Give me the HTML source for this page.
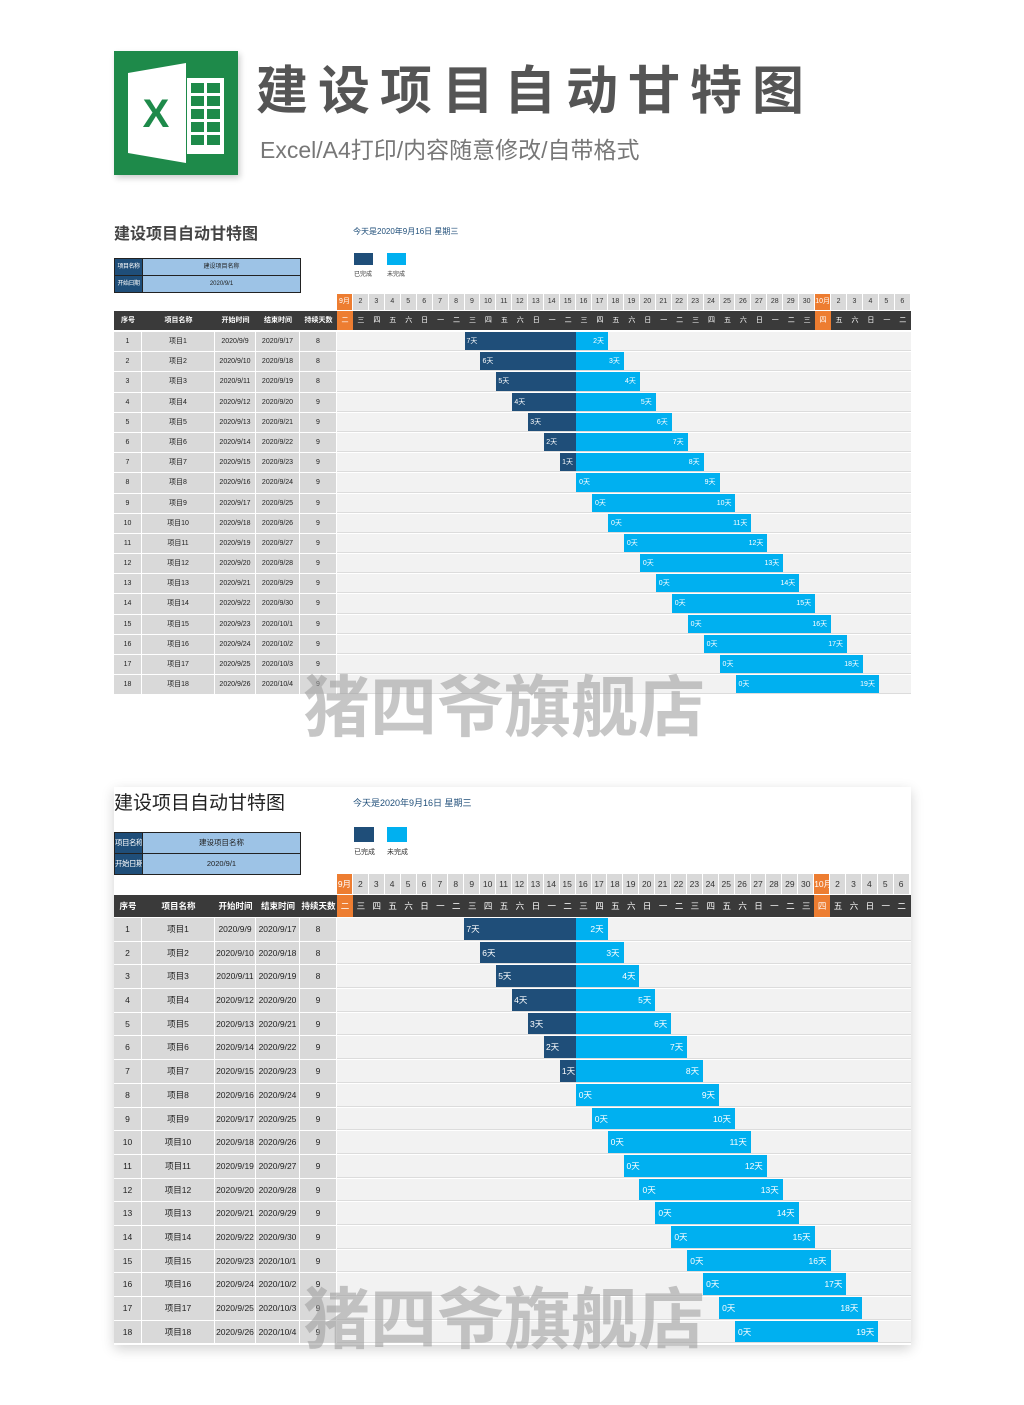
<!DOCTYPE html>
<html><head><meta charset="utf-8"><style>
*{margin:0;padding:0;box-sizing:border-box}
body{width:1024px;height:1405px;background:#fff;position:relative;overflow:hidden;font-family:"Liberation Sans","Noto Sans CJK SC",sans-serif}
.abs{position:absolute}
.logo{left:114px;top:51px;width:124px;height:124px;background:#1e8a4a;box-shadow:2px 3px 6px rgba(0,0,0,.2)}
.h1{left:256px;top:56px;font-size:52px;font-weight:bold;color:#555;letter-spacing:10px;line-height:62px;font-family:"Noto Sans CJK SC",sans-serif}
.sub{left:260px;top:135px;font-size:23px;color:#777;line-height:30px;font-family:"Liberation Sans","Noto Sans CJK SC",sans-serif}
.c{position:absolute;left:114px;width:797px;white-space:nowrap}
.c .t{position:absolute;left:0;font-weight:bold;color:#444;font-family:"Noto Sans CJK SC",sans-serif}
.c .today{position:absolute;left:239px;color:#1f4e79}
.info{position:absolute;left:0;width:187px;border:1.5px solid #222}
.info div{display:flex;border-bottom:1px solid #222}
.info div:last-child{border-bottom:0}
.info span{background:#1f4e79;color:#fff;width:28px;text-align:center;border-right:1px solid #222;overflow:hidden;white-space:nowrap;letter-spacing:-.5px}
.info em{font-style:normal;flex:1;background:#9dc3e6;text-align:center;color:#222}
.lg{position:absolute;width:19px}
.lgt{position:absolute;color:#333}
.grid{position:absolute;left:0;width:797px}
.dr,.wr,.r{display:flex}
.dr{margin-left:223px}
.dr span{width:var(--dw);background:#d9d9d9;border-right:1px solid #fff;text-align:center;color:#333;overflow:hidden}
.dr span.o,.wr span.o{background:#ed7d31;color:#fff}
.wr{background:#3a3a3a;color:#fff}
.wr b,.r b{font-weight:normal;text-align:center;flex:none;overflow:hidden}
.wr span{width:var(--dw);text-align:center}
.wr b{font-weight:bold}
.r{height:var(--rh);line-height:var(--rh);border-bottom:1px solid #fff}
.r b{background:#d9d9d9;border-right:1px solid #fff;color:#222}
.w1{width:28px}.w2{width:73px}.w3{width:41px}.w4{width:44px}.w5{width:37px}
.r p{flex:1;background:#f2f2f2;position:relative;border-bottom:1px solid #dcdcdc}
.r i,.r u{position:absolute;top:0;height:100%;color:#fff;font-style:normal;text-decoration:none}
.r i{background:#1f4e79;left:calc(var(--s)*var(--dw));width:calc((15 - var(--s))*var(--dw));padding-left:2px}
.r u{background:#00b0f0;left:calc(var(--l)*var(--dw));width:calc((var(--e) - var(--l))*var(--dw));text-align:right;padding-right:4px}
.r u s{position:absolute;left:3px;text-decoration:none}
.c1{--dw:15.94px;--rh:20.2px;font-size:7px}
.c2{--dw:15.92px;--rh:23.7px;font-size:8.5px}
.c1 .dr span{height:16px;line-height:16px;margin-bottom:1px}
.c1 .wr{height:19px;line-height:19px;margin-bottom:2px}
.c2 .dr span{height:20px;line-height:20px;margin-bottom:1px}
.c2 .wr{height:22px;line-height:22px;margin-bottom:1px}
.card{left:114px;top:787px;width:797px;height:558px;background:#fff;box-shadow:0 4px 12px rgba(0,0,0,.18)}
.wm{position:absolute;left:303px;font-size:67px;font-weight:bold;color:rgba(160,160,160,.6);font-family:"Noto Sans CJK SC",sans-serif;line-height:80px;white-space:nowrap}
</style></head><body>

<div class="abs logo">
<svg width="124" height="124" viewBox="0 0 124 124">
<rect x="73" y="27" width="37" height="76" fill="#fff"/>
<g fill="#1e8a4a"><rect x="77" y="32" width="13" height="10"/><rect x="93" y="32" width="13" height="10"/>
<rect x="77" y="45" width="13" height="10"/><rect x="93" y="45" width="13" height="10"/>
<rect x="77" y="58" width="13" height="10"/><rect x="93" y="58" width="13" height="10"/>
<rect x="77" y="71" width="13" height="10"/><rect x="93" y="71" width="13" height="10"/>
<rect x="77" y="84" width="13" height="10"/><rect x="93" y="84" width="13" height="10"/></g>
<path d="M14 22 L72 12 L72 112 L14 102 Z" fill="#fff"/>
<text x="42" y="76" font-size="40" font-weight="bold" fill="#1e8a4a" text-anchor="middle" font-family="Liberation Sans">X</text>
</svg></div>
<div class="abs h1">建设项目自动甘特图</div>
<div class="abs sub">Excel/A4打印/内容随意修改/自带格式</div>

<!-- CHART 1 -->
<div class="c c1" style="top:0">
<div class="t" style="top:220px;font-size:16px">建设项目自动甘特图</div>
<div class="today" style="top:226px;font-size:8px">今天是2020年9月16日 星期三</div>
<div class="info" style="top:258px;line-height:16px;font-size:6px"><div><span>项目名称</span><em>建设项目名称</em></div><div><span>开始日期</span><em>2020/9/1</em></div></div>
<div class="lg" style="left:240px;top:253px;height:12px;background:#1f4e79"></div>
<div class="lg" style="left:273px;top:253px;height:12px;background:#00b0f0"></div>
<div class="lgt" style="left:240px;top:269px;font-size:6px">已完成</div>
<div class="lgt" style="left:273px;top:269px;font-size:6px">未完成</div>
<div class="grid" style="top:294px">
<div class="dr"><span class="o">9月</span><span>2</span><span>3</span><span>4</span><span>5</span><span>6</span><span>7</span><span>8</span><span>9</span><span>10</span><span>11</span><span>12</span><span>13</span><span>14</span><span>15</span><span>16</span><span>17</span><span>18</span><span>19</span><span>20</span><span>21</span><span>22</span><span>23</span><span>24</span><span>25</span><span>26</span><span>27</span><span>28</span><span>29</span><span>30</span><span class="o">10月</span><span>2</span><span>3</span><span>4</span><span>5</span><span>6</span></div>
<div class="wr"><b class="w1">序号</b><b class="w2">项目名称</b><b class="w3">开始时间</b><b class="w4">结束时间</b><b class="w5">持续天数</b><span class="o">二</span><span>三</span><span>四</span><span>五</span><span>六</span><span>日</span><span>一</span><span>二</span><span>三</span><span>四</span><span>五</span><span>六</span><span>日</span><span>一</span><span>二</span><span>三</span><span>四</span><span>五</span><span>六</span><span>日</span><span>一</span><span>二</span><span>三</span><span>四</span><span>五</span><span>六</span><span>日</span><span>一</span><span>二</span><span>三</span><span class="o">四</span><span>五</span><span>六</span><span>日</span><span>一</span><span>二</span></div>
<div class="r" style="--s:8;--l:15;--e:17"><b class="w1">1</b><b class="w2">项目1</b><b class="w3">2020/9/9</b><b class="w4">2020/9/17</b><b class="w5">8</b><p><i>7天</i><u>2天</u></p></div>
<div class="r" style="--s:9;--l:15;--e:18"><b class="w1">2</b><b class="w2">项目2</b><b class="w3">2020/9/10</b><b class="w4">2020/9/18</b><b class="w5">8</b><p><i>6天</i><u>3天</u></p></div>
<div class="r" style="--s:10;--l:15;--e:19"><b class="w1">3</b><b class="w2">项目3</b><b class="w3">2020/9/11</b><b class="w4">2020/9/19</b><b class="w5">8</b><p><i>5天</i><u>4天</u></p></div>
<div class="r" style="--s:11;--l:15;--e:20"><b class="w1">4</b><b class="w2">项目4</b><b class="w3">2020/9/12</b><b class="w4">2020/9/20</b><b class="w5">9</b><p><i>4天</i><u>5天</u></p></div>
<div class="r" style="--s:12;--l:15;--e:21"><b class="w1">5</b><b class="w2">项目5</b><b class="w3">2020/9/13</b><b class="w4">2020/9/21</b><b class="w5">9</b><p><i>3天</i><u>6天</u></p></div>
<div class="r" style="--s:13;--l:15;--e:22"><b class="w1">6</b><b class="w2">项目6</b><b class="w3">2020/9/14</b><b class="w4">2020/9/22</b><b class="w5">9</b><p><i>2天</i><u>7天</u></p></div>
<div class="r" style="--s:14;--l:15;--e:23"><b class="w1">7</b><b class="w2">项目7</b><b class="w3">2020/9/15</b><b class="w4">2020/9/23</b><b class="w5">9</b><p><i>1天</i><u>8天</u></p></div>
<div class="r" style="--s:15;--l:15;--e:24"><b class="w1">8</b><b class="w2">项目8</b><b class="w3">2020/9/16</b><b class="w4">2020/9/24</b><b class="w5">9</b><p><u><s>0天</s>9天</u></p></div>
<div class="r" style="--s:16;--l:16;--e:25"><b class="w1">9</b><b class="w2">项目9</b><b class="w3">2020/9/17</b><b class="w4">2020/9/25</b><b class="w5">9</b><p><u><s>0天</s>10天</u></p></div>
<div class="r" style="--s:17;--l:17;--e:26"><b class="w1">10</b><b class="w2">项目10</b><b class="w3">2020/9/18</b><b class="w4">2020/9/26</b><b class="w5">9</b><p><u><s>0天</s>11天</u></p></div>
<div class="r" style="--s:18;--l:18;--e:27"><b class="w1">11</b><b class="w2">项目11</b><b class="w3">2020/9/19</b><b class="w4">2020/9/27</b><b class="w5">9</b><p><u><s>0天</s>12天</u></p></div>
<div class="r" style="--s:19;--l:19;--e:28"><b class="w1">12</b><b class="w2">项目12</b><b class="w3">2020/9/20</b><b class="w4">2020/9/28</b><b class="w5">9</b><p><u><s>0天</s>13天</u></p></div>
<div class="r" style="--s:20;--l:20;--e:29"><b class="w1">13</b><b class="w2">项目13</b><b class="w3">2020/9/21</b><b class="w4">2020/9/29</b><b class="w5">9</b><p><u><s>0天</s>14天</u></p></div>
<div class="r" style="--s:21;--l:21;--e:30"><b class="w1">14</b><b class="w2">项目14</b><b class="w3">2020/9/22</b><b class="w4">2020/9/30</b><b class="w5">9</b><p><u><s>0天</s>15天</u></p></div>
<div class="r" style="--s:22;--l:22;--e:31"><b class="w1">15</b><b class="w2">项目15</b><b class="w3">2020/9/23</b><b class="w4">2020/10/1</b><b class="w5">9</b><p><u><s>0天</s>16天</u></p></div>
<div class="r" style="--s:23;--l:23;--e:32"><b class="w1">16</b><b class="w2">项目16</b><b class="w3">2020/9/24</b><b class="w4">2020/10/2</b><b class="w5">9</b><p><u><s>0天</s>17天</u></p></div>
<div class="r" style="--s:24;--l:24;--e:33"><b class="w1">17</b><b class="w2">项目17</b><b class="w3">2020/9/25</b><b class="w4">2020/10/3</b><b class="w5">9</b><p><u><s>0天</s>18天</u></p></div>
<div class="r" style="--s:25;--l:25;--e:34"><b class="w1">18</b><b class="w2">项目18</b><b class="w3">2020/9/26</b><b class="w4">2020/10/4</b><b class="w5">9</b><p><u><s>0天</s>19天</u></p></div>
</div>
</div>
<div class="wm" style="top:663px">猪四爷旗舰店</div>

<!-- CHART 2 -->
<div class="abs card"></div>
<div class="c c2" style="top:0">
<div class="t" style="top:788px;font-size:19px;font-weight:normal;color:#222">建设项目自动甘特图</div>
<div class="today" style="top:796px;font-size:9px">今天是2020年9月16日 星期三</div>
<div class="info" style="top:832px;line-height:20px;font-size:7.5px"><div><span>项目名称</span><em>建设项目名称</em></div><div><span>开始日期</span><em>2020/9/1</em></div></div>
<div class="lg" style="left:240px;top:827px;height:15px;background:#1f4e79;width:20px"></div>
<div class="lg" style="left:273px;top:827px;height:15px;background:#00b0f0;width:20px"></div>
<div class="lgt" style="left:240px;top:847px;font-size:7px">已完成</div>
<div class="lgt" style="left:273px;top:847px;font-size:7px">未完成</div>
<div class="grid" style="top:874px">
<div class="dr"><span class="o">9月</span><span>2</span><span>3</span><span>4</span><span>5</span><span>6</span><span>7</span><span>8</span><span>9</span><span>10</span><span>11</span><span>12</span><span>13</span><span>14</span><span>15</span><span>16</span><span>17</span><span>18</span><span>19</span><span>20</span><span>21</span><span>22</span><span>23</span><span>24</span><span>25</span><span>26</span><span>27</span><span>28</span><span>29</span><span>30</span><span class="o">10月</span><span>2</span><span>3</span><span>4</span><span>5</span><span>6</span></div>
<div class="wr"><b class="w1">序号</b><b class="w2">项目名称</b><b class="w3">开始时间</b><b class="w4">结束时间</b><b class="w5">持续天数</b><span class="o">二</span><span>三</span><span>四</span><span>五</span><span>六</span><span>日</span><span>一</span><span>二</span><span>三</span><span>四</span><span>五</span><span>六</span><span>日</span><span>一</span><span>二</span><span>三</span><span>四</span><span>五</span><span>六</span><span>日</span><span>一</span><span>二</span><span>三</span><span>四</span><span>五</span><span>六</span><span>日</span><span>一</span><span>二</span><span>三</span><span class="o">四</span><span>五</span><span>六</span><span>日</span><span>一</span><span>二</span></div>
<div class="r" style="--s:8;--l:15;--e:17"><b class="w1">1</b><b class="w2">项目1</b><b class="w3">2020/9/9</b><b class="w4">2020/9/17</b><b class="w5">8</b><p><i>7天</i><u>2天</u></p></div>
<div class="r" style="--s:9;--l:15;--e:18"><b class="w1">2</b><b class="w2">项目2</b><b class="w3">2020/9/10</b><b class="w4">2020/9/18</b><b class="w5">8</b><p><i>6天</i><u>3天</u></p></div>
<div class="r" style="--s:10;--l:15;--e:19"><b class="w1">3</b><b class="w2">项目3</b><b class="w3">2020/9/11</b><b class="w4">2020/9/19</b><b class="w5">8</b><p><i>5天</i><u>4天</u></p></div>
<div class="r" style="--s:11;--l:15;--e:20"><b class="w1">4</b><b class="w2">项目4</b><b class="w3">2020/9/12</b><b class="w4">2020/9/20</b><b class="w5">9</b><p><i>4天</i><u>5天</u></p></div>
<div class="r" style="--s:12;--l:15;--e:21"><b class="w1">5</b><b class="w2">项目5</b><b class="w3">2020/9/13</b><b class="w4">2020/9/21</b><b class="w5">9</b><p><i>3天</i><u>6天</u></p></div>
<div class="r" style="--s:13;--l:15;--e:22"><b class="w1">6</b><b class="w2">项目6</b><b class="w3">2020/9/14</b><b class="w4">2020/9/22</b><b class="w5">9</b><p><i>2天</i><u>7天</u></p></div>
<div class="r" style="--s:14;--l:15;--e:23"><b class="w1">7</b><b class="w2">项目7</b><b class="w3">2020/9/15</b><b class="w4">2020/9/23</b><b class="w5">9</b><p><i>1天</i><u>8天</u></p></div>
<div class="r" style="--s:15;--l:15;--e:24"><b class="w1">8</b><b class="w2">项目8</b><b class="w3">2020/9/16</b><b class="w4">2020/9/24</b><b class="w5">9</b><p><u><s>0天</s>9天</u></p></div>
<div class="r" style="--s:16;--l:16;--e:25"><b class="w1">9</b><b class="w2">项目9</b><b class="w3">2020/9/17</b><b class="w4">2020/9/25</b><b class="w5">9</b><p><u><s>0天</s>10天</u></p></div>
<div class="r" style="--s:17;--l:17;--e:26"><b class="w1">10</b><b class="w2">项目10</b><b class="w3">2020/9/18</b><b class="w4">2020/9/26</b><b class="w5">9</b><p><u><s>0天</s>11天</u></p></div>
<div class="r" style="--s:18;--l:18;--e:27"><b class="w1">11</b><b class="w2">项目11</b><b class="w3">2020/9/19</b><b class="w4">2020/9/27</b><b class="w5">9</b><p><u><s>0天</s>12天</u></p></div>
<div class="r" style="--s:19;--l:19;--e:28"><b class="w1">12</b><b class="w2">项目12</b><b class="w3">2020/9/20</b><b class="w4">2020/9/28</b><b class="w5">9</b><p><u><s>0天</s>13天</u></p></div>
<div class="r" style="--s:20;--l:20;--e:29"><b class="w1">13</b><b class="w2">项目13</b><b class="w3">2020/9/21</b><b class="w4">2020/9/29</b><b class="w5">9</b><p><u><s>0天</s>14天</u></p></div>
<div class="r" style="--s:21;--l:21;--e:30"><b class="w1">14</b><b class="w2">项目14</b><b class="w3">2020/9/22</b><b class="w4">2020/9/30</b><b class="w5">9</b><p><u><s>0天</s>15天</u></p></div>
<div class="r" style="--s:22;--l:22;--e:31"><b class="w1">15</b><b class="w2">项目15</b><b class="w3">2020/9/23</b><b class="w4">2020/10/1</b><b class="w5">9</b><p><u><s>0天</s>16天</u></p></div>
<div class="r" style="--s:23;--l:23;--e:32"><b class="w1">16</b><b class="w2">项目16</b><b class="w3">2020/9/24</b><b class="w4">2020/10/2</b><b class="w5">9</b><p><u><s>0天</s>17天</u></p></div>
<div class="r" style="--s:24;--l:24;--e:33"><b class="w1">17</b><b class="w2">项目17</b><b class="w3">2020/9/25</b><b class="w4">2020/10/3</b><b class="w5">9</b><p><u><s>0天</s>18天</u></p></div>
<div class="r" style="--s:25;--l:25;--e:34"><b class="w1">18</b><b class="w2">项目18</b><b class="w3">2020/9/26</b><b class="w4">2020/10/4</b><b class="w5">9</b><p><u><s>0天</s>19天</u></p></div>
</div>
</div>
<div class="wm" style="top:1275px">猪四爷旗舰店</div>
</body></html>
